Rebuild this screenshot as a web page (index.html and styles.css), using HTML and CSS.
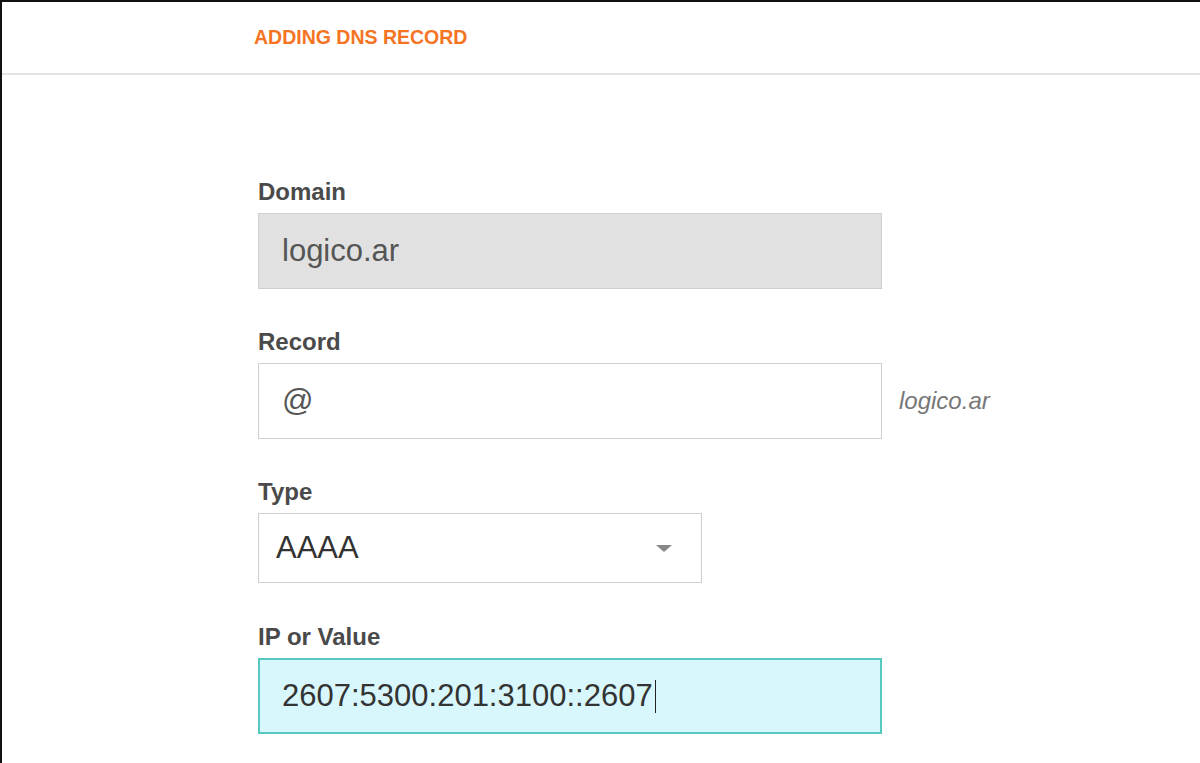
FILE: index.html
```html
<!DOCTYPE html>
<html lang="en">
<head>
  <meta charset="UTF-8">
  <meta name="viewport" content="width=device-width, initial-scale=1.0">
  <title>Adding DNS Record</title>
  <link rel="stylesheet" href="styles.css">
</head>
<body>
  <div class="frame">
    <!-- Cabeçalho -->
    <div class="header">
      <h1 class="title">ADDING DNS RECORD</h1>
    </div>

    <!-- Formulário -->
    <form class="dns-form">
      <div class="field">
        <label class="field-label">Domain</label>
        <div class="text-input disabled">logico.ar</div>
      </div>

      <div class="field">
        <label class="field-label">Record</label>
        <div class="input-row">
          <div class="text-input">@</div>
          <span class="suffix">logico.ar</span>
        </div>
      </div>

      <div class="field field-select">
        <label class="field-label">Type</label>
        <div class="select-input">
          <span>AAAA</span>
          <span class="arrow"></span>
        </div>
      </div>

      <div class="field">
        <label class="field-label">IP or Value</label>
        <div class="text-input focused">2607:5300:201:3100::2607<span class="caret"></span></div>
      </div>
    </form>
  </div>
</body>
</html>
```

FILE: styles.css
```css
body {
  margin: 0;
  padding: 0;
  background-color: #fff;
  font-family: "Liberation Sans", Arial, sans-serif;
}

.frame {
  height: 100vh;
  box-sizing: border-box;
  border-top: 2px solid #111;
  border-left: 2px solid #111;
  overflow: hidden;
}

.header {
  height: 71px;
  display: flex;
  align-items: center;
  padding-left: 252px;
  border-bottom: 2px solid #e4e4e4;
}

.title {
  margin: 0;
  font-size: 19.5px;
  font-weight: bold;
  color: #f47424;
}

.dns-form {
  padding: 105px 0 0 256px;
}

.field {
  margin-bottom: 41px;
}

.field-select {
  margin-bottom: 42px;
}

.field-label {
  display: block;
  font-size: 24px;
  line-height: 24px;
  font-weight: bold;
  color: #4a4a4a;
  margin-bottom: 9px;
}

.input-row {
  display: flex;
  align-items: center;
  gap: 17px;
}

.text-input {
  width: 624px;
  height: 76px;
  box-sizing: border-box;
  border: 1px solid #cfcfcf;
  padding-left: 23px;
  display: flex;
  align-items: center;
  font-size: 31px;
  color: #555;
  background-color: #fff;
}

.text-input.disabled {
  background-color: #e1e1e1;
}

.text-input.focused {
  border: 2px solid #56c9c0;
  padding-left: 22px;
  background-color: #d8f7fc;
  color: #333;
}

.caret {
  display: inline-block;
  width: 1px;
  height: 33px;
  margin-left: 2px;
  background-color: #222;
}

.suffix {
  font-size: 24px;
  font-style: italic;
  color: #777;
}

.select-input {
  width: 444px;
  height: 70px;
  box-sizing: border-box;
  border: 1px solid #cfcfcf;
  padding: 0 29px 0 17px;
  display: flex;
  align-items: center;
  justify-content: space-between;
  font-size: 31px;
  color: #333;
}

.arrow {
  width: 0;
  height: 0;
  border-left: 8px solid transparent;
  border-right: 8px solid transparent;
  border-top: 7px solid #888;
}
```
